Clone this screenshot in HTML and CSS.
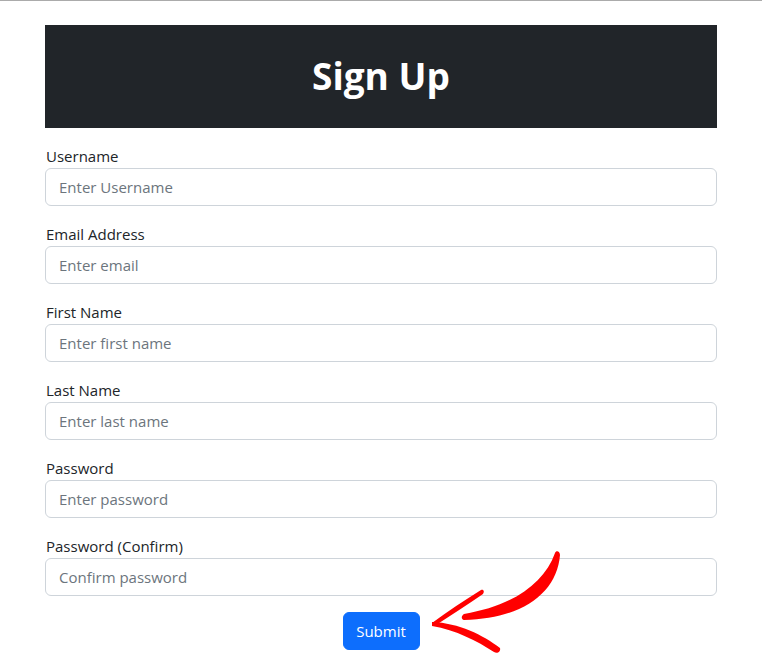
FILE: index.html
```html
<!DOCTYPE html>
<html lang="en">
<head>
<meta charset="utf-8">
<title>Sign Up</title>
<link rel="stylesheet" href="styles.css">
</head>
<body>
<div class="page">
  <div class="container">
    <div class="banner"><h1 class="banner-title">Sign Up</h1></div>
    <form class="form">
      <div class="field">
        <label class="label" for="username">Username</label>
        <input class="input" id="username" type="text" placeholder="Enter Username">
      </div>
      <div class="field">
        <label class="label" for="email">Email Address</label>
        <input class="input" id="email" type="email" placeholder="Enter email">
      </div>
      <div class="field">
        <label class="label" for="first">First Name</label>
        <input class="input" id="first" type="text" placeholder="Enter first name">
      </div>
      <div class="field">
        <label class="label" for="last">Last Name</label>
        <input class="input" id="last" type="text" placeholder="Enter last name">
      </div>
      <div class="field">
        <label class="label" for="pw">Password</label>
        <input class="input" id="pw" type="password" placeholder="Enter password">
      </div>
      <div class="field">
        <label class="label" for="pw2">Password (Confirm)</label>
        <input class="input" id="pw2" type="password" placeholder="Confirm password">
      </div>
      <div class="actions">
        <button class="btn" type="button">Submit</button>
      </div>
    </form>
  </div>
  <svg class="arrow" width="762" height="665" viewBox="0 0 762 665" aria-hidden="true">
    <path fill="#ff0000" d="M560 555 C557 593 522 619 464 620 C461 619 461 616 464 614 C512 606 544 584 555 553 C556 550 560 551 560 555 Z"/>
    <path fill="#ff0000" d="M481 590 C465 600 448 611 432 623 C433 625 435 626 436 625 C452 615 468 604 483 594 C485 591 483 589 481 590 Z"/>
    <path fill="#ff0000" d="M432 622 C459 623 483 635 500 648 C501 652 497 654 494 652 C477 641 456 630 432 626 Z"/>
  </svg>
</div>
</body>
</html>
```

FILE: styles.css
```css
html, body {
  margin: 0;
  padding: 0;
  background: #ffffff;
}

.page {
  position: relative;
  min-height: 665px;
  box-sizing: border-box;
  border-top: 1px solid #ababab;
  font-family: "Open Sans", "Noto Sans", sans-serif;
  font-size: 15px;
  color: #212529;
}

.container {
  margin: 0 45px;
  padding-top: 24px;
}

.banner {
  background: #212529;
  height: 103px;
  display: flex;
  align-items: center;
  justify-content: center;
}

.banner-title {
  margin: 0;
  color: #ffffff;
  font-size: 37px;
  font-weight: 700;
  line-height: 1.2;
}

.form {
  padding-top: 16px;
}

.field {
  margin-bottom: 16px;
}

.label {
  display: block;
  padding-left: 1px;
  line-height: 24px;
  height: 24px;
}

.input {
  display: block;
  box-sizing: border-box;
  width: 100%;
  height: 38px;
  margin: 0;
  padding: 6px 13px;
  border: 1px solid #ced4da;
  border-radius: 6px;
  font-family: inherit;
  font-size: 15px;
  line-height: 24px;
  color: #212529;
  background: #ffffff;
}

.input::placeholder {
  color: #6c757d;
  opacity: 1;
}

.actions {
  display: flex;
  justify-content: center;
}

.btn {
  box-sizing: border-box;
  height: 38px;
  width: 77px;
  padding: 6px 12px;
  border: 1px solid #0d6efd;
  border-radius: 6px;
  background: #0d6efd;
  color: #ffffff;
  font-family: inherit;
  font-size: 15px;
  line-height: 24px;
}

.arrow {
  position: absolute;
  left: 0;
  top: -1px;
  pointer-events: none;
}
```
